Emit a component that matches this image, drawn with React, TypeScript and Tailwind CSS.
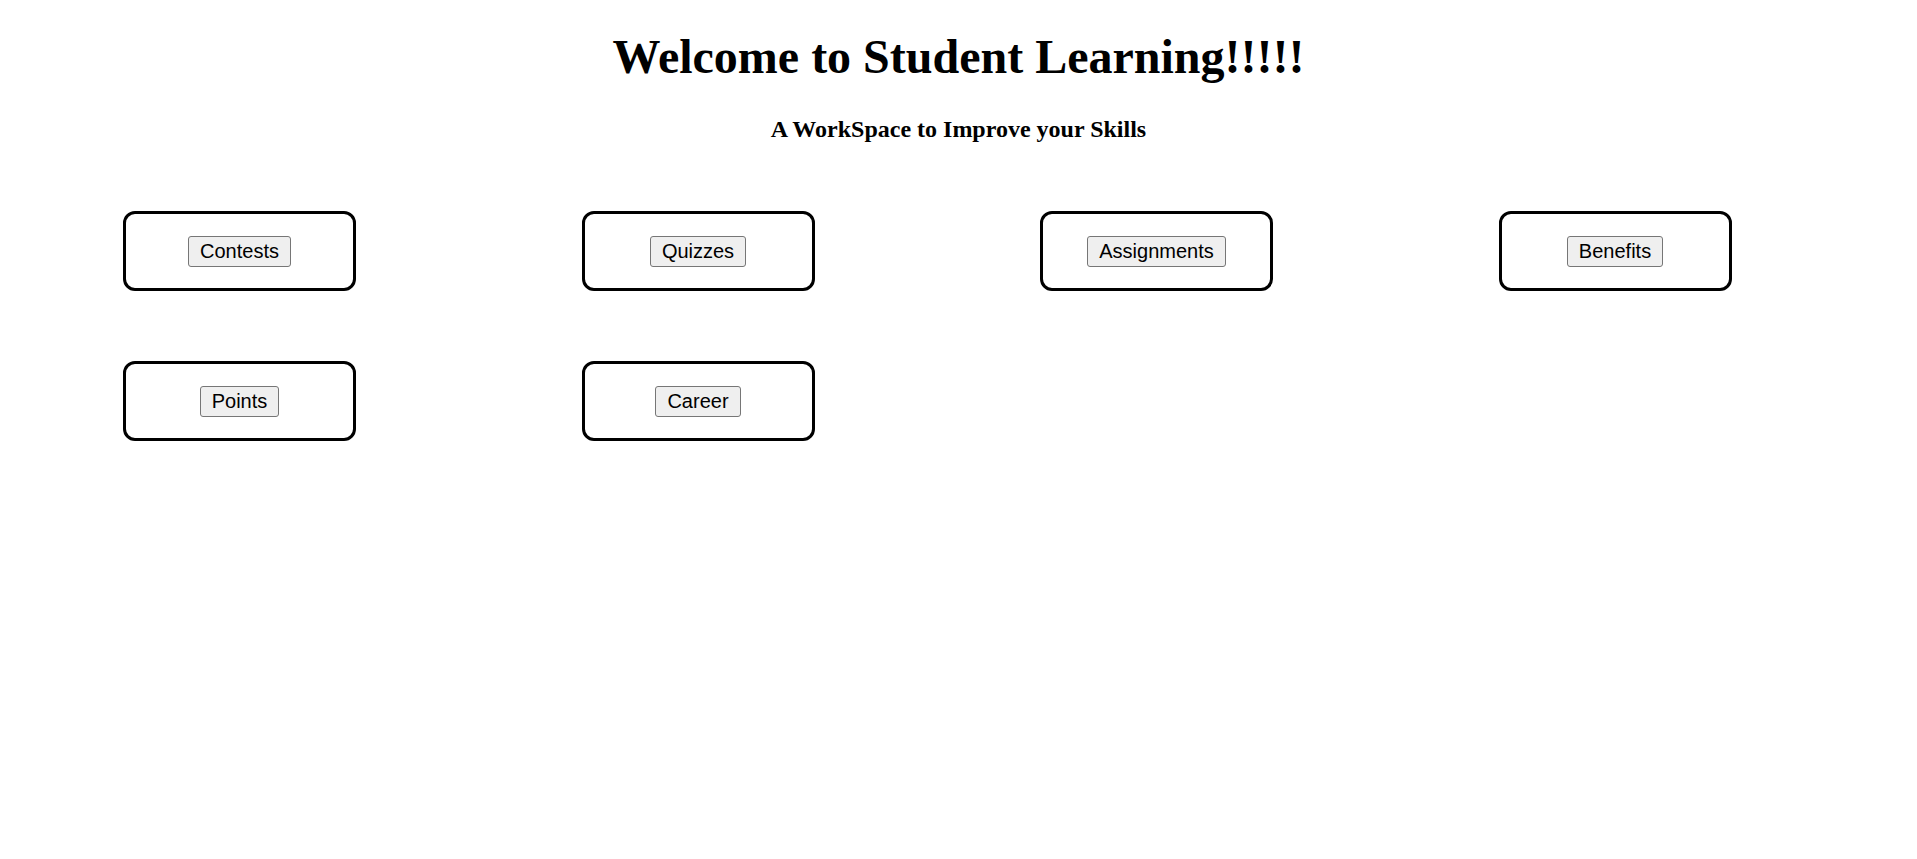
import React from 'react';

const sections = ['Contests', 'Quizzes', 'Assignments', 'Benefits', 'Points', 'Career'];

const App = () => {
    return (
        <div className="min-h-screen w-full bg-white text-black">
            {/* Header */}
            <h1
                className="pt-[30px] text-center text-[48px] font-bold leading-[53px]"
                style={{ fontFamily: '"Liberation Serif", "Times New Roman", serif' }}
            >
                Welcome to Student Learning!!!!!
            </h1>
            <h5
                className="mt-[33px] text-center text-[24px] font-bold leading-[27px]"
                style={{ fontFamily: '"Liberation Serif", "Times New Roman", serif' }}
            >
                A WorkSpace to Improve your Skills
            </h5>

            {/* Section cards */}
            <div className="mt-[68px] grid grid-cols-[repeat(4,233px)] gap-x-[225.5px] gap-y-[70px] pl-[123px]">
                {sections.map(name => (
                    <div
                        key={name}
                        className="flex h-[80px] w-[233px] items-center justify-center rounded-[12px] border-[3px] border-black"
                    >
                        <button
                            className="h-[31px] rounded-[3px] border border-[#767676] bg-[#efefef] px-[11px] text-[20px] leading-[23px] text-black"
                            style={{ fontFamily: '"Liberation Sans", Arial, sans-serif' }}
                        >
                            {name}
                        </button>
                    </div>
                ))}
            </div>
        </div>
    );
};

export default App;
